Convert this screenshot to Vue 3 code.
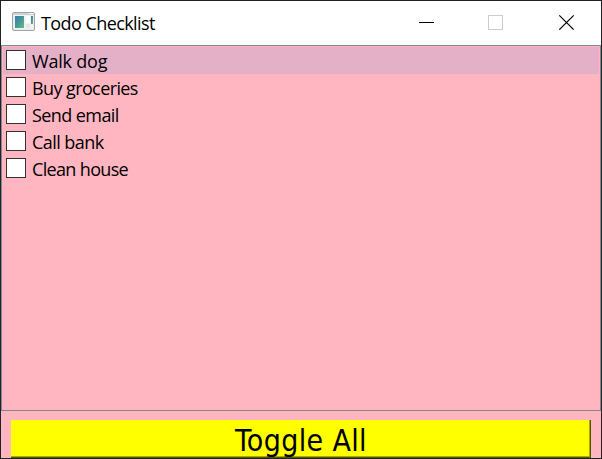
<script setup>
import { ref } from 'vue'

const items = ref([
  { label: 'Walk dog', done: false, tracking: -0.2 },
  { label: 'Buy groceries', done: false, tracking: -0.6 },
  { label: 'Send email', done: false, tracking: -0.58 },
  { label: 'Call bank', done: false, tracking: -0.55 },
  { label: 'Clean house', done: false, tracking: -0.66 },
])
const selected = ref(0)

function toggleAll() {
  const target = !items.value.every((i) => i.done)
  items.value.forEach((i) => (i.done = target))
}
</script>

<template>
  <div class="window">
    <header class="titlebar">
      <svg class="app-icon" width="23" height="19" viewBox="0 0 23 19">
        <defs>
          <linearGradient id="pane" x1="0" y1="0" x2="1" y2="1">
            <stop offset="0" stop-color="#3f79a8" />
            <stop offset="0.5" stop-color="#44989a" />
            <stop offset="1" stop-color="#6fba7c" />
          </linearGradient>
        </defs>
        <rect x="0.5" y="0.5" width="22" height="18" rx="1.5" fill="#e9ebed" stroke="#a0a4a8" />
        <rect x="1" y="1" width="21" height="2" fill="#ccd2d8" />
        <rect x="17" y="1" width="4" height="1" fill="#f5f5f5" />
        <rect x="2" y="3" width="19" height="14" fill="#f1f2f2" />
        <rect x="3" y="4" width="9" height="12" fill="url(#pane)" />
        <rect x="14" y="4" width="4" height="7" fill="#fff" />
        <rect x="14" y="12" width="4" height="4" fill="#e6e6e6" />
        <rect x="19" y="4" width="2" height="8" fill="url(#pane)" />
      </svg>
      <span class="title">Todo Checklist</span>
      <svg class="controls" width="157" height="16" viewBox="0 0 157 16" shape-rendering="crispEdges">
        <path d="M0 8.5H15" stroke="#000" fill="none" />
        <rect x="69.5" y="1.5" width="14" height="14" stroke="#ccc" fill="none" />
        <path d="M140.3 1.3L154.7 15.7M154.7 1.3L140.3 15.7" stroke="#000" stroke-width="1.15" fill="none" shape-rendering="auto" />
      </svg>
    </header>
    <ul class="list">
      <li
        v-for="(item, i) in items"
        :key="item.label"
        class="row"
        :class="{ selected: i === selected }"
        @click="selected = i"
      >
        <span class="box" @click="item.done = !item.done">
          <svg v-if="item.done" width="18" height="18" viewBox="0 0 18 18">
            <path d="M3 9l4 4 8-9" stroke="#333" stroke-width="1.5" fill="none" />
          </svg>
        </span>
        <span class="label" :style="{ letterSpacing: item.tracking + 'px' }">{{ item.label }}</span>
      </li>
    </ul>
    <footer class="footer">
      <button class="toggle" @click="toggleAll">Toggle All</button>
    </footer>
  </div>
</template>

<style>
body {
  margin: 0;
  overflow: hidden;
}
</style>

<style scoped>
.window {
  box-sizing: border-box;
  width: 602px;
  height: 459px;
  border: 1px solid #222226;
  background: #ffb6c1;
  display: flex;
  flex-direction: column;
  font-family: 'Open Sans', 'Noto Sans', sans-serif;
  color: #000;
}
.titlebar {
  height: 44px;
  flex: none;
  background: #fff;
  display: flex;
  align-items: flex-start;
}
.app-icon {
  margin: 11px 0 0 11px;
}
.title {
  margin: 10px 0 0 6px;
  font-size: 18px;
  line-height: 24px;
  letter-spacing: -0.57px;
  white-space: nowrap;
}
.controls {
  margin: 13px 25px 0 auto;
}
.list {
  box-sizing: border-box;
  height: 366px;
  flex: none;
  margin: 0;
  padding: 1px;
  border: 1px solid #828790;
  list-style: none;
}
.row {
  height: 27px;
  display: flex;
  align-items: flex-start;
}
.row.selected {
  background: #e4b0c8;
}
.box {
  box-sizing: border-box;
  width: 20px;
  height: 20px;
  margin: 3px 0 0 3px;
  border: 1px solid #333;
  background: #fff;
}
.label {
  margin: 2px 0 0 6px;
  font-size: 18px;
  line-height: 24px;
}
.footer {
  padding: 9px 10px 0;
  display: flex;
}
.toggle {
  box-sizing: border-box;
  width: 580px;
  height: 38px;
  padding: 4px 0 0;
  border: 0;
  background: #ff0;
  box-shadow: inset -1px -1px #555500, inset -2px -2px #aaaa00;
  color: #000;
  font-family: 'DejaVu Sans Condensed', 'DejaVu Sans', sans-serif;
  font-stretch: condensed;
  font-size: 30px;
  line-height: 34px;
  letter-spacing: 0.35px;
}
</style>
